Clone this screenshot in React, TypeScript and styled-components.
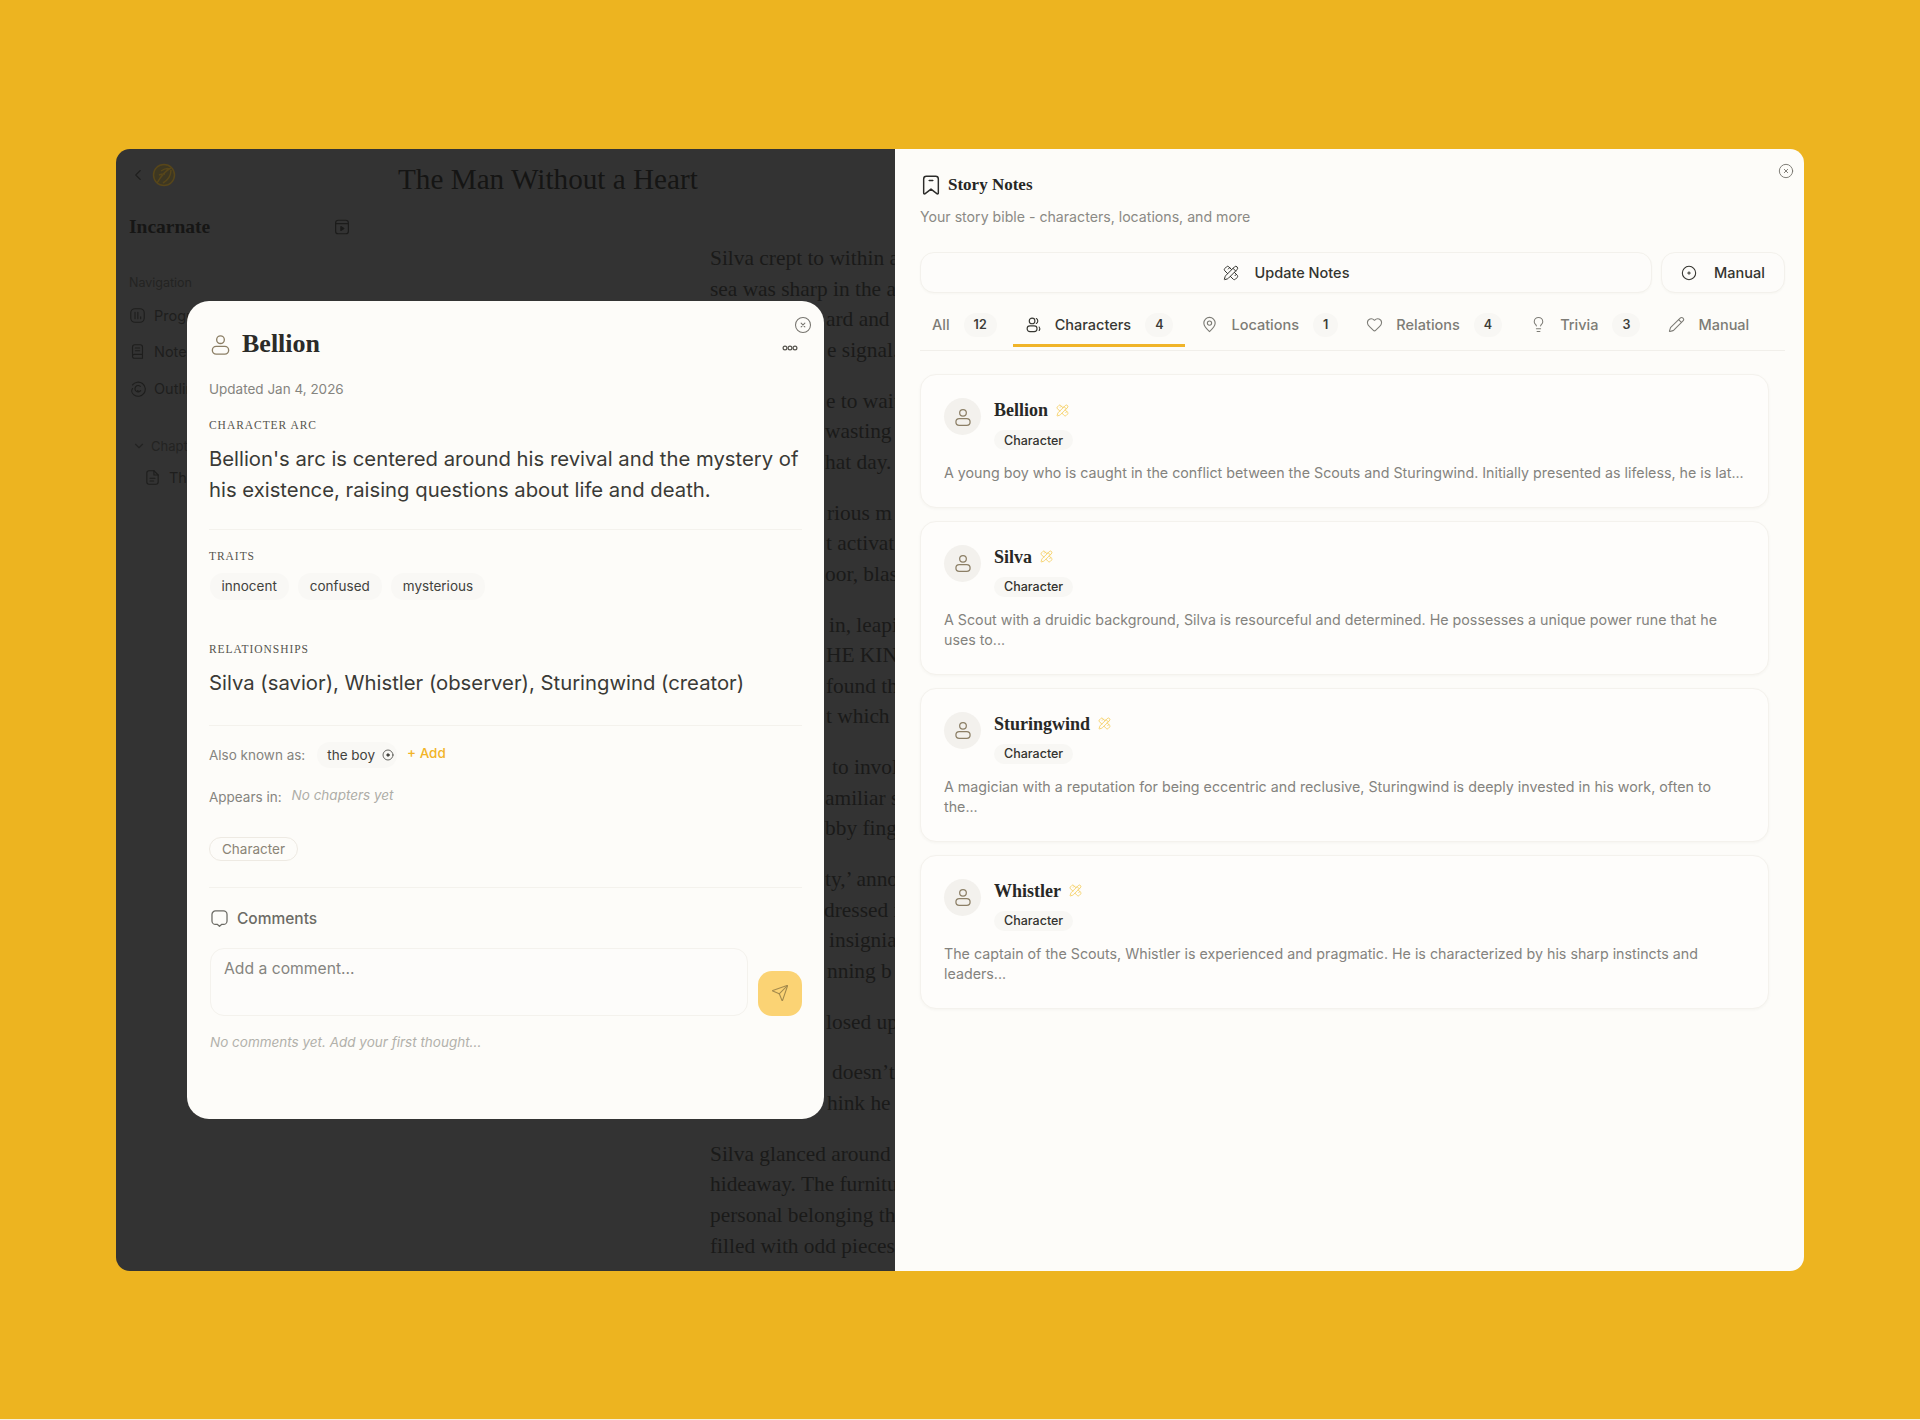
import React from 'react';
import styled, { createGlobalStyle } from 'styled-components';
import { PencilRuler, Send, Heart, Lightbulb, Pencil, ChevronLeft, ChevronDown } from 'lucide-react';

const SERIF = '"Liberation Serif", "Noto Serif", serif';
const SANS = 'Inter, "Liberation Sans", sans-serif';

const Global = createGlobalStyle`
  html, body { margin: 0; padding: 0; background: #f7f0dc; }
  body { font-family: ${SANS}; width: 1920px; height: 1420px; overflow: hidden; }
  * { box-sizing: border-box; }
`;

const Page = styled.div`
  padding: 149px 116px 0 116px;
  height: 1419px;
  background: #edb420;
`;
const Win = styled.div`
  position: relative;
  display: flex;
  width: 1688px;
  height: 1122px;
  border-radius: 14px;
  overflow: hidden;
`;

/* dimmed writer view */
const Dim = styled.div`
  width: 779px;
  flex: none;
  background: #333333;
  display: flex;
  overflow: hidden;
  color: #1c1c1b;
`;
const Sidebar = styled.aside`
  width: 239px;
  flex: none;
  padding: 14px 0 0 13px;
`;
const TopRow = styled.div`
  display: flex;
  align-items: center;
  height: 24px;
  gap: 5px;
  color: #1f1f1e;
`;
const BookRow = styled.div`
  margin-top: 28px;
  height: 24px;
  display: flex;
  align-items: center;
  justify-content: space-between;
  padding-right: 4px;
`;
const BookName = styled.div`
  font: 700 19.5px/24px ${SERIF};
  color: #161615;
`;
const NavLabel = styled.div`
  margin-top: 36px;
  font-size: 12.5px;
  line-height: 16px;
  color: #232322;
`;
const NavList = styled.div`
  margin-top: 6px;
`;
const NavItem = styled.div`
  height: 36.5px;
  display: flex;
  align-items: center;
  gap: 8px;
  font-size: 14.5px;
  color: #1e1e1d;
`;
const ChapterHead = styled.div`
  margin-top: 29px;
  height: 20px;
  padding-left: 3px;
  display: flex;
  align-items: center;
  gap: 5px;
  font-size: 13px;
  color: #232322;
`;
const ChapterItem = styled.div`
  margin-top: 10px;
  height: 24px;
  padding-left: 15px;
  display: flex;
  align-items: center;
  gap: 8px;
  font-size: 14.5px;
  color: #1e1e1d;
`;
const Main = styled.main`
  flex: 1;
  min-width: 0;
  padding-top: 12px;
`;
const BookTitle = styled.h1`
  margin: 0 0 0 43px;
  font: 400 29.2px/36px ${SERIF};
  color: #151514;
  white-space: nowrap;
`;
const Article = styled.article`
  margin: 46px 0 0 355px;
  width: 330px;
  font: 400 21.4px/30.6px ${SERIF};
  color: #1a1a19;
`;
const Para = styled.p`
  margin: 0 0 20.2px 0;
  white-space: nowrap;
`;
const Line = styled.span<{ $indent: number }>`
  display: block;
  padding-left: ${(p) => p.$indent}px;
`;

/* notes panel */
const Panel = styled.section`
  position: relative;
  flex: 1;
  background: #fdfcf9;
  padding: 24px 19px 0 25px;
`;
const RoundClose = styled.span<{ $top: number; $right: number }>`
  position: absolute;
  display: flex;
  color: #77756f;
  top: ${(p) => p.$top}px;
  right: ${(p) => p.$right}px;
`;
const PanelHead = styled.div`
  display: flex;
  align-items: center;
  gap: 6px;
  height: 24px;
  color: #2c2c2a;
`;
const PanelTitle = styled.h2`
  margin: 0;
  font: 700 17px/24px ${SERIF};
  color: #262624;
`;
const PanelSub = styled.p`
  margin: 10px 0 0;
  font-size: 14.15px;
  line-height: 20px;
  color: #8b8a85;
`;
const Actions = styled.div`
  display: flex;
  gap: 9px;
  margin-top: 25px;
  height: 41px;
`;
const ActionBtn = styled.button<{ $grow?: boolean }>`
  flex: ${(p) => (p.$grow ? 1 : 'none')};
  width: ${(p) => (p.$grow ? 'auto' : '124px')};
  display: flex;
  align-items: center;
  justify-content: center;
  gap: ${(p) => (p.$grow ? 16 : 17)}px;
  border: 1px solid #f3f1ec;
  border-radius: 14px;
  background: #fdfcfa;
  box-shadow: 0 1px 2px rgba(60, 50, 30, 0.03);
  font: 500 14.5px/20px ${SANS};
  color: #34342f;
`;
const TabBar = styled.div`
  margin-top: 10px;
  display: flex;
  gap: 4px;
  padding-bottom: 3px;
  border-bottom: 1px solid #f1efea;
`;
const Tab = styled.div<{ $active?: boolean }>`
  height: 44px;
  padding: 2px 12px 0;
  display: flex;
  align-items: center;
  gap: 13px;
  border-bottom: 3px solid ${(p) => (p.$active ? '#f0b429' : 'transparent')};
  font: 500 14.5px/20px ${SANS};
  color: ${(p) => (p.$active ? '#383833' : '#7d7c76')};
`;
const TabBadge = styled.span`
  height: 24px;
  margin-left: 1px;
  padding: 0 10px;
  border-radius: 12px;
  background: #f8f7f4;
  display: flex;
  align-items: center;
  justify-content: center;
  font-size: 12.5px;
  font-weight: 600;
  color: #3c3c38;
`;
const CardList = styled.div`
  margin: 23px 16px 0 0;
  display: flex;
  flex-direction: column;
  gap: 13px;
`;
const Card = styled.article`
  border: 1px solid #f4f2ed;
  border-radius: 16px;
  background: #fefdfb;
  box-shadow: 0 1px 3px rgba(60, 50, 30, 0.04);
  padding: 23px 23px 23px;
`;
const CardTop = styled.div`
  display: flex;
  gap: 13px;
`;
const Avatar = styled.div`
  width: 37px;
  height: 37px;
  flex: none;
  border-radius: 50%;
  background: #f3f1ed;
  display: flex;
  align-items: center;
  justify-content: center;
  color: #8c7f66;
`;
const NameRow = styled.div`
  display: flex;
  align-items: center;
  gap: 8px;
  height: 24px;
  color: #f5cd5b;
`;
const CardName = styled.h3`
  margin: 0;
  font: 700 18px/24px ${SERIF};
  color: #282826;
`;
const KindBadge = styled.span`
  display: flex;
  width: fit-content;
  align-items: center;
  height: 20px;
  margin-top: 8px;
  padding: 0 10px;
  border-radius: 10px;
  background: #f8f7f4;
  font-size: 12.5px;
  font-weight: 500;
  color: #33332f;
`;
const CardText = styled.p`
  margin: 13px 0 0;
  font-size: 14.25px;
  line-height: 20.5px;
  color: #84837e;
`;

/* detail modal */
const Modal = styled.div`
  position: absolute;
  left: 71px;
  top: 152px;
  width: 637px;
  height: 818px;
  border-radius: 22px;
  background: #fdfcf9;
  padding: 28px 22px 0 22px;
`;
const DotsBtn = styled.span`
  position: absolute;
  right: 26px;
  top: 44px;
  display: flex;
  color: #55534d;
`;
const ModalHead = styled.div`
  display: flex;
  align-items: center;
  gap: 10px;
  height: 30px;
  color: #8c7f66;
`;
const ModalName = styled.h2`
  margin: 0;
  font: 700 26px/30px ${SERIF};
  color: #2b2b28;
`;
const Updated = styled.div`
  margin-top: 20px;
  font-size: 13.5px;
  line-height: 20px;
  color: #85847f;
`;
const SectionLabel = styled.div<{ $top: number }>`
  margin-top: ${(p) => p.$top}px;
  font: 400 11.5px/16px ${SERIF};
  letter-spacing: 0.95px;
  text-transform: uppercase;
  color: #55544e;
`;
const BigText = styled.p`
  margin: 11px 0 0;
  font-size: 20.3px;
  line-height: 30.8px;
  color: #3a3a36;
`;
const Rule = styled.hr<{ $top: number }>`
  margin: ${(p) => p.$top}px 0 0;
  border: 0;
  border-top: 1px solid #f4f2ed;
`;
const Chips = styled.div`
  margin-top: 9px;
  display: flex;
  gap: 9px;
  padding-left: 0.5px;
`;
const Chip = styled.span`
  height: 27px;
  padding: 0 12px;
  border-radius: 13px;
  background: #f9f8f5;
  display: flex;
  align-items: center;
  font-size: 13.5px;
  color: #42423d;
`;
const MetaRow = styled.div<{ $top: number; $gap: number }>`
  margin-top: ${(p) => p.$top}px;
  display: flex;
  align-items: center;
  gap: ${(p) => p.$gap}px;
  height: 28px;
  font-size: 13.5px;
  color: #85847f;
`;
const Alias = styled.span`
  height: 26px;
  margin-left: 2px;
  padding: 0 3px 0 10px;
  border-radius: 13px;
  background: #f9f8f5;
  display: flex;
  align-items: center;
  gap: 7px;
  color: #42423d;
  font-size: 13.5px;
`;
const AddLink = styled.span`
  color: #f2b428;
  font-weight: 500;
  font-size: 13.5px;
  transform: translateY(-2px);
`;
const NoneYet = styled.span`
  font-style: italic;
  font-size: 13.5px;
  color: #aeada7;
  transform: translateY(-2px);
`;
const KindPill = styled.span`
  display: inline-flex;
  align-items: center;
  height: 24px;
  margin-top: 26px;
  padding: 0 12px;
  border: 1px solid #eeeae3;
  border-radius: 12px;
  font-size: 13.5px;
  color: #8a8476;
`;
const CommentsHead = styled.div`
  margin-top: 19px;
  display: flex;
  align-items: center;
  gap: 8px;
  height: 22px;
  padding-left: 1px;
  font-size: 15.5px;
  font-weight: 500;
  color: #6c6b65;
`;
const ComposeRow = styled.div`
  margin-top: 18.5px;
  display: flex;
  align-items: flex-end;
  gap: 10px;
  padding-left: 1px;
`;
const CommentBox = styled.div`
  width: 544px;
  height: 68px;
  border: 1px solid #f4f2ed;
  border-radius: 14px;
  background: #fdfcfa;
  padding: 9px 13px;
  font-size: 15.7px;
  line-height: 22px;
  color: #85847f;
`;
const SendBtn = styled.div`
  width: 45px;
  height: 45px;
  border-radius: 14px;
  background: #fbd374;
  display: flex;
  align-items: center;
  justify-content: center;
  color: #a48a4c;
`;
const EmptyNote = styled.p`
  margin: 16px 0 0 1px;
  font-size: 13.5px;
  line-height: 20px;
  font-style: italic;
  color: #b2b1ab;
`;

type IconProps = { size?: number; width?: number };
const Svg: React.FC<IconProps & { children: React.ReactNode }> = ({ size = 20, width = 1.6, children }) => (
  <svg width={size} height={size} viewBox="0 0 24 24" fill="none" stroke="currentColor" strokeWidth={width} strokeLinecap="round" strokeLinejoin="round">
    {children}
  </svg>
);
const PersonIcon: React.FC<IconProps> = (p) => (
  <Svg {...p}>
    <circle cx="12" cy="7" r="4" />
    <rect x="3.5" y="14" width="17" height="8" rx="4" />
  </Svg>
);
const CloseIcon: React.FC<IconProps> = (p) => (
  <Svg {...p}>
    <circle cx="12" cy="12" r="10" />
    <path d="M9.5 9.5l5 5M14.5 9.5l-5 5" />
  </Svg>
);
const PlusCircle: React.FC<IconProps> = (p) => (
  <Svg {...p}>
    <circle cx="12" cy="12" r="10" />
    <path d="M12 10v4M10 12h4" />
  </Svg>
);
const DotCircle: React.FC<IconProps> = (p) => (
  <Svg {...p}>
    <circle cx="12" cy="12" r="10" />
    <circle cx="12" cy="12" r="2.5" fill="currentColor" />
  </Svg>
);
const BookmarkIcon: React.FC<IconProps> = (p) => (
  <Svg {...p}>
    <path d="M7 2.5h10a3 3 0 0 1 3 3V21a.8.8 0 0 1-1.3.6L12 16.5l-6.7 5.1A.8.8 0 0 1 4 21V5.5a3 3 0 0 1 3-3z" />
    <path d="M10 7h4" />
  </Svg>
);
const UsersIcon: React.FC<IconProps> = (p) => (
  <Svg {...p}>
    <circle cx="10" cy="7" r="4" />
    <rect x="3" y="14" width="14" height="8" rx="4" />
    <path d="M16 3.5a4 4 0 0 1 0 7M20 15.5a4 4 0 0 1 0 5" />
  </Svg>
);
const PinIcon: React.FC<IconProps> = (p) => (
  <Svg {...p}>
    <path d="M12 22c-4-3.5-8-7.5-8-12a8 8 0 0 1 16 0c0 4.5-4 8.5-8 12z" />
    <circle cx="12" cy="10" r="3" />
  </Svg>
);
const CommentIcon: React.FC<IconProps> = (p) => (
  <Svg {...p}>
    <path d="M7 2.5h10a4.5 4.5 0 0 1 4.5 4.5v8a4.5 4.5 0 0 1-4.5 4.5h-2.5L12 22l-2.5-2.5H7A4.5 4.5 0 0 1 2.5 15V7A4.5 4.5 0 0 1 7 2.5z" />
  </Svg>
);
const DotsIcon = () => (
  <svg width="16" height="6" viewBox="0 0 16 6" fill="none" stroke="currentColor" strokeWidth="1.2">
    <circle cx="3" cy="3" r="1.9" />
    <circle cx="8" cy="3" r="1.9" />
    <circle cx="13" cy="3" r="1.9" />
  </svg>
);
const Logo = () => (
  <svg width="24" height="24" viewBox="0 0 24 24" fill="none" stroke="#57461a" strokeWidth="1.5">
    <circle cx="12" cy="12" r="10.5" fill="#3d3722" />
    <path d="M5 20C9 13 13 8 19 5M9 8c3-2 6-3 9-2M7 12c2-1 4-1 6-1M19 7c0 5-3 10-8 13" />
  </svg>
);
const ScreenIcon: React.FC<IconProps> = (p) => (
  <Svg {...p}>
    <rect x="3.5" y="3" width="17" height="18" rx="3.5" />
    <path d="M3.5 7.5h17" />
    <path d="M10.5 11.5l4 2.5-4 2.5z" fill="currentColor" />
  </Svg>
);
const ProgressIcon: React.FC<IconProps> = (p) => (
  <Svg {...p}>
    <rect x="2.5" y="2.5" width="19" height="19" rx="6" />
    <path d="M8.5 7.5v9M12.5 7.5v9M16.5 14v2.5" />
  </Svg>
);
const NotebookIcon: React.FC<IconProps> = (p) => (
  <Svg {...p}>
    <path d="M5 18.5V5.5a3 3 0 0 1 3-3h8a3 3 0 0 1 3 3V16H7.5A2.5 2.5 0 0 0 5 18.5 2.5 2.5 0 0 0 7.5 21.5H19V16" />
    <path d="M9 7h6M9 11h6" />
  </Svg>
);
const SwirlIcon: React.FC<IconProps> = (p) => (
  <Svg {...p}>
    <path d="M5 7a10 10 0 1 1 2 14c-3-2-4-6-2-9" />
    <path d="M16 9a4.5 4.5 0 1 0 .5 6c-1.5 1-3.5 1-4.5 0" />
  </Svg>
);
const FileIcon: React.FC<IconProps> = (p) => (
  <Svg {...p}>
    <path d="M14 2.5H7a3 3 0 0 0-3 3v13a3 3 0 0 0 3 3h10a3 3 0 0 0 3-3V8.5z" />
    <path d="M14 2.5v6h6M8.5 13h7M8.5 17h5" />
  </Svg>
);

/* Each line is [text, left offset]: the start of a line hidden by the open modal is not shown. */
const paragraphs: [string, number][][] = [
  [['Silva crept to within a', 0], ['sea was sharp in the air', 0], ['ard and', 116], ['e signal.', 117]],
  [['e to wait', 116], ['wasting', 115], ['hat day.', 115]],
  [['rious m', 117], ['t activat', 116], ['oor, blas', 115]],
  [['in, leapi', 119], ['HE KING', 116], ['found th', 116], ['t which', 116]],
  [['to invol', 122], ['amiliar s', 115], ['bby finge', 115]],
  [['ty,’ anno', 115], ['dressed i', 114], ['insignia', 119], ['nning b', 117]],
  [['losed up', 116]],
  [['doesn’t', 122], ['hink he', 117]],
  [['Silva glanced around', 0], ['hideaway. The furnitu', 0], ['personal belonging th', 0], ['filled with odd pieces', 0]],
];

const characters = [
  { name: 'Bellion', text: 'A young boy who is caught in the conflict between the Scouts and Sturingwind. Initially presented as lifeless, he is lat...' },
  { name: 'Silva', text: 'A Scout with a druidic background, Silva is resourceful and determined. He possesses a unique power rune that he uses to...' },
  { name: 'Sturingwind', text: 'A magician with a reputation for being eccentric and reclusive, Sturingwind is deeply invested in his work, often to the...' },
  { name: 'Whistler', text: 'The captain of the Scouts, Whistler is experienced and pragmatic. He is characterized by his sharp instincts and leaders...' },
];

const tabs = [
  { label: 'All', count: '12' },
  { label: 'Characters', count: '4', icon: <UsersIcon size={17} />, active: true },
  { label: 'Locations', count: '1', icon: <PinIcon size={17} /> },
  { label: 'Relations', count: '4', icon: <Heart size={17} strokeWidth={1.5} /> },
  { label: 'Trivia', count: '3', icon: <Lightbulb size={17} strokeWidth={1.5} /> },
  { label: 'Manual', icon: <Pencil size={17} strokeWidth={1.5} /> },
];

export default function App() {
  return (
    <Page>
      <Global />
      <Win>
        <Dim>
          <Sidebar>
            <TopRow>
              <ChevronLeft size={18} strokeWidth={1.5} />
              <Logo />
            </TopRow>
            <BookRow>
              <BookName>Incarnate</BookName>
              <ScreenIcon size={18} />
            </BookRow>
            <NavLabel>Navigation</NavLabel>
            <NavList>
              <NavItem><ProgressIcon size={17} />Progress</NavItem>
              <NavItem><NotebookIcon size={17} />Notes</NavItem>
              <NavItem><SwirlIcon size={17} />Outline</NavItem>
            </NavList>
            <ChapterHead><ChevronDown size={14} />Chapters</ChapterHead>
            <ChapterItem><FileIcon size={17} />The Man</ChapterItem>
          </Sidebar>
          <Main>
            <BookTitle>The Man Without a Heart</BookTitle>
            <Article>
              {paragraphs.map((para, i) => (
                <Para key={i}>
                  {para.map(([text, indent], j) => (
                    <Line key={j} $indent={indent}>{text}</Line>
                  ))}
                </Para>
              ))}
            </Article>
          </Main>
        </Dim>
        <Panel>
          <RoundClose $top={14} $right={10}><CloseIcon size={16} width={1.4} /></RoundClose>
          <PanelHead>
            <BookmarkIcon size={22} />
            <PanelTitle>Story Notes</PanelTitle>
          </PanelHead>
          <PanelSub>Your story bible - characters, locations, and more</PanelSub>
          <Actions>
            <ActionBtn $grow><PencilRuler size={16} strokeWidth={1.5} />Update Notes</ActionBtn>
            <ActionBtn><PlusCircle size={16} />Manual</ActionBtn>
          </Actions>
          <TabBar>
            {tabs.map((t) => (
              <Tab key={t.label} $active={t.active}>
                {t.icon}
                <span>{t.label}</span>
                {t.count && <TabBadge>{t.count}</TabBadge>}
              </Tab>
            ))}
          </TabBar>
          <CardList>
            {characters.map((c) => (
              <Card key={c.name}>
                <CardTop>
                  <Avatar><PersonIcon size={20} width={1.5} /></Avatar>
                  <div>
                    <NameRow>
                      <CardName>{c.name}</CardName>
                      <PencilRuler size={13} strokeWidth={1.6} />
                    </NameRow>
                    <KindBadge>Character</KindBadge>
                  </div>
                </CardTop>
                <CardText>{c.text}</CardText>
              </Card>
            ))}
          </CardList>
        </Panel>
        <Modal>
          <RoundClose $top={15} $right={12}><CloseIcon size={18} width={1.4} /></RoundClose>
          <DotsBtn><DotsIcon /></DotsBtn>
          <ModalHead>
            <PersonIcon size={23} width={1.4} />
            <ModalName>Bellion</ModalName>
          </ModalHead>
          <Updated>Updated Jan 4, 2026</Updated>
          <SectionLabel $top={18}>Character Arc</SectionLabel>
          <BigText>Bellion's arc is centered around his revival and the mystery of his existence, raising questions about life and death.</BigText>
          <Rule $top={23} />
          <SectionLabel $top={18}>Traits</SectionLabel>
          <Chips>
            <Chip>innocent</Chip>
            <Chip>confused</Chip>
            <Chip>mysterious</Chip>
          </Chips>
          <SectionLabel $top={41}>Relationships</SectionLabel>
          <BigText>Silva (savior), Whistler (observer), Sturingwind (creator)</BigText>
          <Rule $top={27} />
          <MetaRow $top={15} $gap={10}>
            <span>Also known as:</span>
            <Alias>the boy<DotCircle size={12} /></Alias>
            <AddLink>+ Add</AddLink>
          </MetaRow>
          <MetaRow $top={14} $gap={10}>
            <span>Appears in:</span>
            <NoneYet>No chapters yet</NoneYet>
          </MetaRow>
          <KindPill>Character</KindPill>
          <Rule $top={26} />
          <CommentsHead><CommentIcon size={19} />Comments</CommentsHead>
          <ComposeRow>
            <CommentBox>Add a comment...</CommentBox>
            <SendBtn><Send size={18} strokeWidth={1.4} /></SendBtn>
          </ComposeRow>
          <EmptyNote>No comments yet. Add your first thought...</EmptyNote>
        </Modal>
      </Win>
    </Page>
  );
}
